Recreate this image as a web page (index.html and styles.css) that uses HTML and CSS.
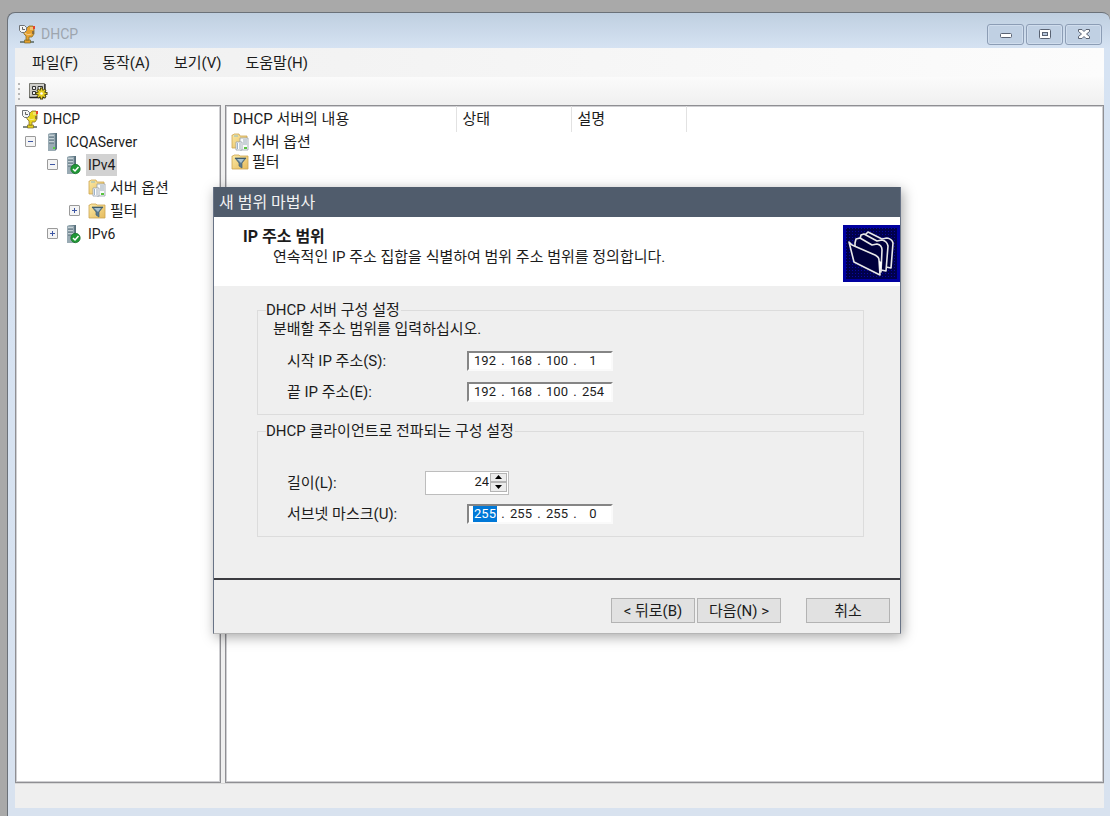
FILE: index.html
```html
<!DOCTYPE html>
<html lang="ko">
<head>
<meta charset="utf-8">
<title>DHCP</title>
<link rel="stylesheet" href="styles.css">
</head>
<body>
<svg class="sprites" aria-hidden="true">
  <defs>
    <linearGradient id="steel" x1="0" y1="0" x2="1" y2="0"><stop offset="0" stop-color="#a9b9c0"/><stop offset=".5" stop-color="#8499a4"/><stop offset="1" stop-color="#526a76"/></linearGradient>
    <linearGradient id="paper" x1="0" y1="0" x2="1" y2="1"><stop offset="0" stop-color="#fbe9a5"/><stop offset="1" stop-color="#e6bb5c"/></linearGradient>
    <symbol id="trophy" viewBox="0 0 18 20">
      <path d="M2 18h14" stroke="#5f6c68" stroke-width="1.600"/><path d="M6.500 16h6v3h-6z" fill="currentColor" stroke="#74652c" stroke-width=".7"/>
      <path d="M5 5l4-1 2-2h4l1 2v6l-2 3h-3v3H8v-4l-2-2z" fill="currentColor" stroke="#86702a" stroke-width=".8"/>
      <path d="M12 3h3v3h-3z" fill="#fff" opacity=".35"/><path d="M6.500 9q3 3 7 1" fill="none" stroke="#fff" opacity=".5"/>
      <path d="M15 2h2v3h-2z" fill="#e5432b"/><path d="M14 7h2v3h-2z" fill="#6d5b42" opacity=".7"/>
      <path d="M1.500 1.500h5l2 2v3l-2 2h-3l-2-2z" fill="#f3f5f5" stroke="#6f7376"/><path d="M4.500 3v2.500H7" fill="none" stroke="#555" stroke-width=".9"/>
    </symbol>
    <symbol id="server" viewBox="0 0 18 20">
      <path d="M4 2l2-1h7v16l-2 2H4z" fill="url(#steel)"/><path d="M4 2h7v17H4z" fill="#9aabb4"/>
      <path d="M5 4h5M5 7h5M5 10h5" stroke="#eef4f6"/><path d="M5 5h5M5 8h5M5 11h5" stroke="#536b77"/>
      <path d="M9 15h2v2H9z" fill="#56d341"/>
    </symbol>
    <symbol id="server-ok" viewBox="0 0 18 20">
      <path d="M1 2l2-1h7v16l-1 2H1z" fill="url(#steel)"/><path d="M1 2h7v17H1z" fill="#9aabb4"/>
      <path d="M2 4h5M2 7h5M2 10h5" stroke="#eef4f6"/><path d="M2 5h5M2 8h5M2 11h5" stroke="#536b77"/>
      <circle cx="9.500" cy="14" r="4.700" fill="#219836" stroke="#176d2a" stroke-width=".7"/><path d="M7 14l2 2 3.500-4" fill="none" stroke="#fff" stroke-width="1.500"/>
    </symbol>
    <symbol id="options" viewBox="0 0 18 20">
      <path d="M1 3h1l1-1h5l1 2h7v12H1z" fill="url(#paper)" stroke="#cda450" stroke-width=".8"/><path d="M3 4h4" stroke="#8bbcc9"/>
      <path d="M9 6h8v12H9z" fill="#f8fafb" stroke="#94a0a8" stroke-width=".8"/><path d="M5 10h6v8H5z" fill="#fff" stroke="#94a0a8" stroke-width=".8"/>
      <path d="M6 12h1M6 14h1M6 16h1" stroke="#3d6999"/><path d="M8 12h2M8 14h2M8 16h2M12 8h4M12 10h4M12 12h4" stroke="#9aa8b4"/><path d="M13 15h3v2h-3z" fill="#59c440"/>
    </symbol>
    <symbol id="filter" viewBox="0 0 18 20">
      <path d="M1 4h1l1-1h5l1 1h8v13H1z" fill="url(#paper)" stroke="#cda450" stroke-width=".8"/>
      <path d="M4 6h11l-4 5v5l-3-2v-3z" fill="#59798f" stroke="#456274" stroke-width=".7"/><path d="M6 7h7l-3 4z" fill="#a9c3d2"/><path d="M4 6.500h11" stroke="#405d6e"/>
    </symbol>
  </defs>
</svg>

<main class="window">
  <header class="titlebar">
    <svg class="icon app-icon"><use href="#trophy"/></svg>
    <h1 class="app-title">DHCP</h1>
    <div class="window-buttons">
      <button class="window-button" aria-label="최소화"><svg viewBox="0 0 16 14"><rect x="2.500" y="6.500" width="11" height="4" rx="1" fill="#fff" stroke="#596272"/></svg></button>
      <button class="window-button" aria-label="최대화"><svg viewBox="0 0 16 14"><rect x="2.500" y="2.500" width="11" height="9" rx="1" fill="#fff" stroke="#596272"/><rect x="5.500" y="5.500" width="5" height="3" fill="#b7c7dc" stroke="#596272"/></svg></button>
      <button class="window-button" aria-label="닫기"><svg viewBox="0 0 16 14"><path d="M2.500 2.500h3.500l2 2 2-2h3.500v2l-3 2.500 3 2.500v2H10l-2-2-2 2H2.500v-2l3-2.500-3-2.500z" fill="#fff" stroke="#596272"/></svg></button>
    </div>
  </header>
  <div class="content">
    <nav class="menubar">
      <button class="menu">파일(F)</button>
      <button class="menu">동작(A)</button>
      <button class="menu">보기(V)</button>
      <button class="menu">도움말(H)</button>
    </nav>
    <div class="toolbar">
      <span class="grip"></span>
      <button class="tool" aria-label="속성">
        <svg viewBox="0 0 20 20"><path d="M1.500 2.500h15v14h-15z" fill="#cfcfca" stroke="#77776f"/><path d="M1.500 16.500h15.500V3" fill="none" stroke="#222" stroke-width="1.300"/><path d="M4.500 5.500h3v3h-3zM4.500 10.500h3v3h-3zM10 5.500h4.500v4H10z" fill="#eee" stroke="#333"/><path d="M13.500 6.500v12M7.500 12.500h12M9.500 8.500l8 8M17.500 8.500l-8 8" stroke="#403a0c" stroke-width="3"/><path d="M13.500 7.500v10M8.500 12.500h10M10 9l7 7M17 9l-7 7" stroke="#ead52b" stroke-width="1.500"/><circle cx="13.500" cy="12.500" r="3.200" fill="#e8cf1f"/><circle cx="13.500" cy="12.500" r="1.300" fill="#fff"/></svg>
      </button>
    </div>
    <div class="panes">
      <nav class="tree-pane" aria-label="콘솔 트리">
        <ul class="tree">
          <li><div class="node"><span class="no-expander"></span><svg class="icon tree-trophy"><use href="#trophy"/></svg><span class="node-label">DHCP</span></div>
            <ul class="branch">
              <li><div class="node"><button class="expander" aria-label="ICQAServer 축소"></button><svg class="icon"><use href="#server"/></svg><span class="node-label">ICQAServer</span></div>
                <ul class="branch">
                  <li><div class="node"><button class="expander" aria-label="IPv4 축소"></button><svg class="icon"><use href="#server-ok"/></svg><span class="node-label selected">IPv4</span></div>
                    <ul class="branch">
                      <li><div class="node"><span class="no-expander"></span><svg class="icon"><use href="#options"/></svg><span class="node-label korean">서버 옵션</span></div></li>
                      <li><div class="node"><button class="expander closed" aria-label="필터 확장"></button><svg class="icon"><use href="#filter"/></svg><span class="node-label korean">필터</span></div></li>
                    </ul>
                  </li>
                  <li><div class="node"><button class="expander closed" aria-label="IPv6 확장"></button><svg class="icon"><use href="#server-ok"/></svg><span class="node-label">IPv6</span></div></li>
                </ul>
              </li>
            </ul>
          </li>
        </ul>
      </nav>
      <section class="list-pane">
        <table class="list">
          <thead><tr><th class="name-column">DHCP 서버의 내용</th><th class="value-column">상태</th><th class="value-column">설명</th><th></th></tr></thead>
          <tbody>
            <tr><td><div class="entry"><svg class="icon"><use href="#options"/></svg>서버 옵션</div></td><td></td><td></td><td></td></tr>
            <tr><td><div class="entry"><svg class="icon"><use href="#filter"/></svg>필터</div></td><td></td><td></td><td></td></tr>
          </tbody>
        </table>
      </section>
    </div>
    <footer class="statusbar"></footer>
  </div>

  <form class="dialog" role="dialog" aria-labelledby="wizard-title">
    <h2 class="dialog-title" id="wizard-title">새 범위 마법사</h2>
    <div class="banner">
      <div class="banner-text">
        <h3 class="step-title">IP 주소 범위</h3>
        <p class="step-description">연속적인 IP 주소 집합을 식별하여 범위 주소 범위를 정의합니다.</p>
      </div>
      <svg class="folders" viewBox="0 0 57 57" aria-hidden="true">
        <defs><pattern id="mesh" width="3" height="3" patternUnits="userSpaceOnUse"><path d="M0 0h3v3H0z" fill="#00004c"/><path d="M0 0h1v1H0z" fill="#0808a0"/></pattern></defs>
        <path d="M0 0h57v57H0z" fill="#0000a0"/><path d="M3 3h51v51H3z" fill="url(#mesh)"/>
        <g fill="#00003c" stroke="#e8e8e8" stroke-width="1.600" stroke-linejoin="round">
          <path d="M22 10l3-3 14 7 5-1q5 1 6 5l-2 25-5-1-21-10z"/>
          <path d="M17 14l1-4 3-1 13 7 5-1q5 1 6 6l-2 25-5-1-21-10z"/>
          <path d="M12 18l1-4 4-1 12 7 5-1q5 1 5 6l-1 22-5-1-21-10z"/>
          <path d="M6 17l3 3 23 10q4 2 4 5l1 15-26-13z"/>
        </g>
        <path d="M36 36l3 1-2 11z" fill="#fff"/>
      </svg>
    </div>
    <div class="dialog-body">
      <fieldset class="group">
        <legend>DHCP 서버 구성 설정</legend>
        <p class="hint">분배할 주소 범위를 입력하십시오.</p>
        <div class="field">
          <label for="start-1">시작 IP 주소(S):</label>
          <div class="ip"><input id="start-1" class="octet" value="192"><span>.</span><input class="octet" aria-label="시작 IP 2" value="168"><span>.</span><input class="octet" aria-label="시작 IP 3" value="100"><span>.</span><input class="octet" aria-label="시작 IP 4" value="1"></div>
        </div>
        <div class="field">
          <label for="end-1">끝 IP 주소(E):</label>
          <div class="ip"><input id="end-1" class="octet" value="192"><span>.</span><input class="octet" aria-label="끝 IP 2" value="168"><span>.</span><input class="octet" aria-label="끝 IP 3" value="100"><span>.</span><input class="octet" aria-label="끝 IP 4" value="254"></div>
        </div>
      </fieldset>
      <fieldset class="group">
        <legend>DHCP 클라이언트로 전파되는 구성 설정</legend>
        <div class="field length-field">
          <label for="length">길이(L):</label>
          <div class="spinner">
            <input id="length" class="spinner-value" value="24">
            <div class="spinner-buttons">
              <button type="button" class="step" aria-label="증가"><svg viewBox="0 0 7 4"><path d="M0 4l3.500-4L7 4z"/></svg></button>
              <button type="button" class="step" aria-label="감소"><svg viewBox="0 0 7 4"><path d="M0 0l3.500 4L7 0z"/></svg></button>
            </div>
          </div>
        </div>
        <div class="field">
          <label for="mask-1">서브넷 마스크(U):</label>
          <div class="ip"><input id="mask-1" class="octet active" value="255"><span>.</span><input class="octet" aria-label="마스크 2" value="255"><span>.</span><input class="octet" aria-label="마스크 3" value="255"><span>.</span><input class="octet" aria-label="마스크 4" value="0"></div>
        </div>
      </fieldset>
    </div>
    <div class="actions">
      <button type="button" class="action">&lt; 뒤로(B)</button>
      <button type="button" class="action">다음(N) &gt;</button>
      <button type="button" class="action cancel">취소</button>
    </div>
  </form>
</main>
</body>
</html>
```
FILE: styles.css
```css
* { box-sizing: border-box; }

body {
  margin: 0;
  padding: 12px 0 0 7px;
  background: #a9a9a9;
  color: #1c1c1c;
  font: 15px/20px Roboto, "Noto Sans CJK KR", sans-serif;
}

button, input { font: inherit; color: inherit; margin: 0; padding: 0; }
h1, h2, h3, p, ul { margin: 0; padding: 0; font-weight: normal; }
ul { list-style: none; }
.sprites { position: absolute; width: 0; height: 0; }
.icon { width: 18px; height: 20px; flex: none; }

.window {
  position: relative;
  display: flex;
  flex-direction: column;
  min-height: calc(100vh - 12px);
  padding: 0 6px 8px 7px;
  border: solid #6b7178;
  border-width: 1px 0 0 1px;
  border-radius: 8px 8px 0 0;
  background: linear-gradient(#bfcfe0, #d6e3f3 36px, #d8e2ef);
}

.titlebar { display: flex; align-items: center; height: 35px; padding: 7px 2px 0 3px; }
.app-icon { color: #e6a02d; }
.app-title { flex: 1; margin-left: 5px; font-size: 14px; color: #9da5ae; }
.window-buttons { display: flex; gap: 2px; }
.window-button {
  display: grid;
  place-items: center;
  width: 37px;
  height: 21px;
  border: 1px solid #8c9db5;
  border-radius: 3px;
  background: #c0d0e3;
  box-shadow: inset 0 0 0 1px #d0dded;
}
.window-button svg { width: 16px; height: 14px; }

.content { flex: 1; display: flex; flex-direction: column; background: #efefef; }
.menubar { display: flex; gap: 24px; height: 29px; padding: 0 17px; background: linear-gradient(90deg, #f0f0f0, #f3f3f3 30%, #fcfcfc); }
.menu { border: 0; background: none; }
.toolbar { display: flex; align-items: center; height: 28px; padding-left: 3px; gap: 8px; background: linear-gradient(#fbfbfb, #f0f0f0); }
.grip { width: 2px; height: 17px; background: repeating-linear-gradient(#b8b8b8 0 2px, transparent 2px 5px); }
.tool { width: 20px; height: 20px; border: 0; background: none; }
.tool svg { display: block; width: 20px; height: 20px; }

.panes { flex: 1; display: grid; grid-template-columns: 206px 1fr; gap: 4px; }
.tree-pane, .list-pane { border: 1px solid #8f8f93; box-shadow: inset 0 0 0 1px #cfcfd2; background: #fff; }
.tree-pane { padding: 1px 0 0 1px; }
.list-pane { padding: 0 0 0 1px; }
.branch { padding-left: 22px; }
.node { display: flex; align-items: center; height: 23px; }
.expander, .no-expander { width: 11px; height: 11px; margin-right: 8px; flex: none; }
.tree > li > .node > .no-expander { width: 4px; margin-right: 0; }
.tree > li > .branch { padding-left: 8px; }
.expander {
  border: 1px solid #9a9a9a;
  border-radius: 1px;
  background: linear-gradient(#3d56a4, #3d56a4) center / 5px 1px no-repeat, #f4f4f4;
}
.expander.closed {
  background: linear-gradient(#3d56a4, #3d56a4) center / 5px 1px no-repeat, linear-gradient(#3d56a4, #3d56a4) center / 1px 5px no-repeat, #f4f4f4;
}
.tree-trophy { color: #e8d51d; }
.node-label { margin-left: 2px; padding: 0 2px; font-size: 14px; line-height: 22px; }
.korean { font-size: 15px; }
.selected { background: #d2d2d2; }

.list { width: 100%; border-collapse: collapse; table-layout: fixed; }
.list th { height: 26px; padding: 0 6px; border-right: 1px solid #e2e2e2; text-align: left; font-weight: normal; }
.list th:last-child { border-right: 0; }
.name-column { width: 229px; }
.value-column { width: 115px; }
.list td { padding: 0 4px; }
.entry { display: flex; align-items: center; gap: 3px; height: 20px; }
.statusbar { height: 25px; border-top: 1px solid #d8d8d8; }

/* The wizard floats over the console window */
.dialog {
  position: absolute;
  top: 174px;
  left: 205px;
  right: 209px;
  border: 1px solid #687386;
  border-top: 0;
  border-bottom-color: #b5b5b5;
  background: #efefef;
  box-shadow: 2px 3px 12px rgba(0, 0, 0, .35);
}
.dialog-title { height: 30px; padding-left: 5px; background: #505c6c; color: #f2f2f2; font-size: 16px; line-height: 32px; }
.banner { display: flex; justify-content: space-between; min-height: 69px; padding: 8px 0 0 29px; background: #fff; }
.step-title { padding-top: 2px; line-height: 20px; font-weight: bold; font-size: 16px; }
.step-description { padding-left: 30px; }
.folders { width: 57px; height: 57px; flex: none; }

.dialog-body { padding: 14px 36px 41px 43px; }
.group { min-width: 0; margin: 0; padding: 0 8px 7px; border: 1px solid #dcdcdc; }
.group legend { padding: 0 1px 0 0; line-height: 20px; }
.group + .group { margin-top: 6px; }
.hint { padding-left: 7px; line-height: 20px; margin-top: -1px; }
.field { display: grid; grid-template-columns: 180px 1fr; align-items: center; height: 31px; padding-left: 21px; }
.hint + .field { margin-top: 6px; }
.length-field { grid-template-columns: 138px 1fr; margin-top: 26px; }

.ip {
  display: flex;
  align-items: center;
  gap: 4px;
  width: 146px;
  height: 20px;
  padding: 0 4px;
  border: 2px solid #fafafa;
  border-top-color: #858585;
  border-left-color: #858585;
  background: #fff;
  font-size: 13px;
  line-height: 16px;
}
.ip span { width: 4px; text-align: center; }
.octet { width: 24px; height: 16px; border: 0; background: none; text-align: center; }
.octet.active { background: #0078d7; color: #fff; }

.spinner { display: flex; width: 84px; height: 24px; padding: 1px; border: 1px solid #bdbdbd; background: #fff; }
.spinner-value { flex: 1; min-width: 0; height: 18px; border: 0; padding-right: 1px; text-align: right; font-size: 13px; background: none; }
.spinner-buttons { display: flex; flex-direction: column; width: 17px; height: 19px; }
.step { flex: 1; display: grid; place-items: center; border: 1px solid #b4b4b4; background: #ececec; }
.step svg { width: 7px; height: 4px; }

.actions { display: flex; justify-content: flex-end; gap: 2px; padding: 18px 10px 10px; border-top: 2px solid #3b3b40; }
.action { width: 84px; height: 25px; border: 1px solid #b3b3b3; background: #e1e1e1; }
.cancel { margin-left: 23px; }
```
